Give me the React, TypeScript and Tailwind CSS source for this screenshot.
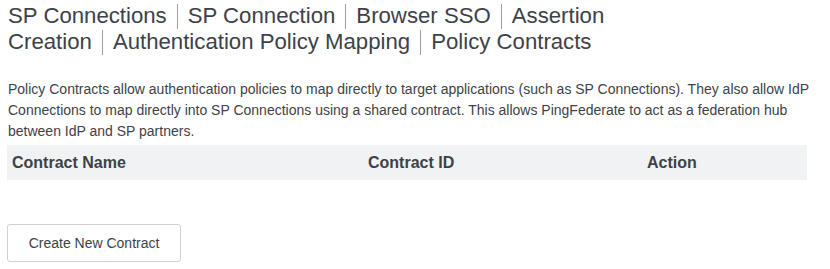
import React from 'react';

const crumbs = [
  'SP Connections',
  'SP Connection',
  'Browser SSO',
  'Assertion Creation',
  'Authentication Policy Mapping',
  'Policy Contracts',
];

const Separator: React.FC = () => (
  <span className="inline-block w-px h-[25px] bg-[#9a9ea3] mx-[10px] align-[-6px]" />
);

const App: React.FC = () => {
  return (
    <div className="w-[830px] h-[269px] bg-white text-[#3d4247] font-['Liberation_Sans',Arial,sans-serif] pl-[8px] pr-[14px]">
      {/* Breadcrumb trail */}
      <h1 className="w-[640px] pt-[3px] text-[22.2px] leading-[25px] font-normal">
        {crumbs.map((c, i) => (
          <React.Fragment key={c}>
            {i > 0 && <Separator />}
            {c.split(' ').map((w, j) => (
              <React.Fragment key={j}>
                {j > 0 && ' '}
                <span>{w}</span>
              </React.Fragment>
            ))}
          </React.Fragment>
        ))}
      </h1>

      <p className="mt-[24px] text-[14px] leading-[21px]">
        Policy Contracts allow authentication policies to map directly to target applications (such as SP Connections). They also allow IdP Connections to map directly into SP Connections using a shared contract. This allows PingFederate to act as a federation hub between IdP and SP partners.
      </p>

      <table className="mt-[3px] -ml-px w-[800px] border-collapse">
        <thead>
          <tr className="bg-[#f1f2f4] h-[35px]">
            <th className="w-[361px] pl-[5px] text-left text-[16px] font-bold">Contract Name</th>
            <th className="w-[279px] text-left text-[16px] font-bold">Contract ID</th>
            <th className="text-left text-[16px] font-bold">Action</th>
          </tr>
        </thead>
      </table>

      <button className="mt-[44px] -ml-px w-[174px] h-[38px] border border-[#cfd1d4] rounded-[3px] bg-white text-[14px] text-[#3d4247]">
        Create New Contract
      </button>
    </div>
  );
};

export default App;
